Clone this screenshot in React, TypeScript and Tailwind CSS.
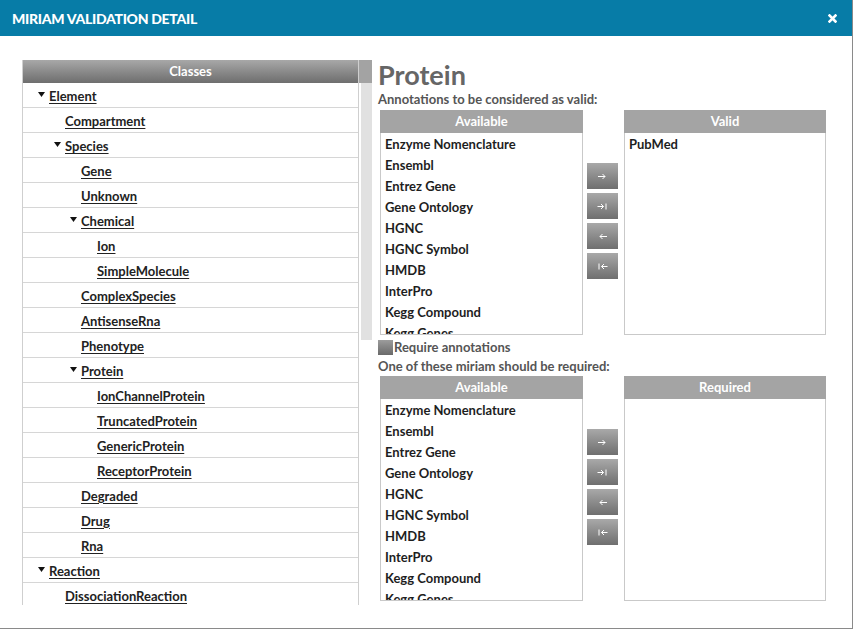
import type { ReactNode } from "react";

type Node = { label: string; level: number; open?: boolean };

const tree: Node[] = [
  { label: "Element", level: 0, open: true },
  { label: "Compartment", level: 1 },
  { label: "Species", level: 1, open: true },
  { label: "Gene", level: 2 },
  { label: "Unknown", level: 2 },
  { label: "Chemical", level: 2, open: true },
  { label: "Ion", level: 3 },
  { label: "SimpleMolecule", level: 3 },
  { label: "ComplexSpecies", level: 2 },
  { label: "AntisenseRna", level: 2 },
  { label: "Phenotype", level: 2 },
  { label: "Protein", level: 2, open: true },
  { label: "IonChannelProtein", level: 3 },
  { label: "TruncatedProtein", level: 3 },
  { label: "GenericProtein", level: 3 },
  { label: "ReceptorProtein", level: 3 },
  { label: "Degraded", level: 2 },
  { label: "Drug", level: 2 },
  { label: "Rna", level: 2 },
  { label: "Reaction", level: 0, open: true },
  { label: "DissociationReaction", level: 1 },
];

const databases = [
  "Enzyme Nomenclature",
  "Ensembl",
  "Entrez Gene",
  "Gene Ontology",
  "HGNC",
  "HGNC Symbol",
  "HMDB",
  "InterPro",
  "Kegg Compound",
  "Kegg Genes",
];

const indent = ["pl-[15px]", "pl-[31px]", "pl-[47px]", "pl-[63px]"];

function Caret() {
  return (
    <svg width="7" height="5" viewBox="0 0 7 5" className="mr-[4px] mb-[4px]">
      <path d="M0 0h7L3.5 5z" fill="#111" />
    </svg>
  );
}

function TreeRow({ node }: { node: Node }) {
  return (
    <div className={`h-[25px] shrink-0 flex items-center pt-[3px] border-b border-[#d6d6d6] ${indent[node.level]}`}>
      {node.open ? <Caret /> : <span className="w-[11px]" />}
      <a className="underline underline-offset-2 text-[13px] font-bold text-[#222]">{node.label}</a>
    </div>
  );
}

function ListBox({ title, items }: { title: string; items: string[] }) {
  return (
    <div className="flex flex-col">
      <div className="h-[23px] bg-[#a4a4a4] text-white font-bold text-[13px] flex items-center justify-center">
        {title}
      </div>
      <div className="h-[202px] border border-t-0 border-[#c9c9c9] overflow-hidden pt-[1px]">
        {items.map((it) => (
          <div key={it} className="h-[21px] pl-[4px] flex items-center text-[13px] font-bold text-[#1e1e1e]">
            {it}
          </div>
        ))}
      </div>
    </div>
  );
}

function MoveButton({ children }: { children: ReactNode }) {
  return (
    <div className="w-[31px] h-[26px] bg-gradient-to-b from-[#a9a9a9] to-[#6f6f6f] flex items-center justify-center text-white">
      {children}
    </div>
  );
}

function Arrow({ d }: { d: string }) {
  return (
    <svg width="11" height="7" viewBox="0 0 11 7" fill="none" stroke="#fff" strokeWidth="1">
      <path d={d} />
    </svg>
  );
}

// add, add all, remove, remove all
function Buttons() {
  return (
    <div className="flex flex-col gap-[4px] pt-[53px] ml-[4px] mr-[6px]">
      <MoveButton>
        <Arrow d="M1 3.5h7M5.5 1l2.5 2.5L5.5 6" />
      </MoveButton>
      <MoveButton>
        <Arrow d="M0.5 3.5h6M4 1l2.5 2.5L4 6M9 0.5v6" />
      </MoveButton>
      <MoveButton>
        <Arrow d="M3 3.5h7M5.5 1L3 3.5L5.5 6" />
      </MoveButton>
      <MoveButton>
        <Arrow d="M4.5 3.5h6M7 1L4.5 3.5L7 6M2 0.5v6" />
      </MoveButton>
    </div>
  );
}

function Picker({ left, right, rightItems }: { left: string[]; right: string; rightItems: string[] }) {
  return (
    <div className="flex ml-[2px]">
      <div className="w-[203px]">
        <ListBox title="Available" items={left} />
      </div>
      <Buttons />
      <div className="w-[202px]">
        <ListBox title={right} items={rightItems} />
      </div>
    </div>
  );
}

export default function App() {
  return (
    <div className="w-[853px] h-[630px] bg-white overflow-hidden" style={{ fontFamily: "Lato, 'Open Sans', sans-serif" }}>
      <div className="w-[853px] h-[629px] border-r border-b border-[#8a8a8a] flex flex-col">
        <div className="h-[36px] shrink-0 bg-[#077ca7] flex items-center justify-between pl-[12px] pr-[15px]">
          <span className="text-white font-black text-[14px] tracking-[-0.3px]">MIRIAM VALIDATION DETAIL</span>
          <svg width="9" height="9" viewBox="0 0 9 9" stroke="#fff" strokeWidth="2.6" strokeLinecap="square">
            <path d="M1.5 1.5l6 6M7.5 1.5l-6 6" />
          </svg>
        </div>

        <div className="flex pl-[22px] pt-[24px]">
          {/* class tree */}
          <div className="flex h-[545px]">
            <div className="w-[337px] flex flex-col border-l border-r border-[#cfcfcf] overflow-hidden">
              <div className="h-[23px] shrink-0 bg-gradient-to-b from-[#a8a8a8] to-[#6e6e6e] text-white font-bold text-[13px] flex items-center justify-center">
                Classes
              </div>
              {tree.map((n) => (
                <TreeRow key={n.label} node={n} />
              ))}
            </div>
            <div className="w-[13px] flex flex-col">
              <div className="h-[23px] bg-[#a3a3a3]" />
              <div className="h-[257px] ml-[2px] bg-[#e1e1e1]" />
            </div>
          </div>

          {/* annotation rules */}
          <div className="ml-[6px] flex flex-col">
            <div className="h-[33px] text-[27px] font-bold text-[#666] leading-[33px] -mt-[2px]">Protein</div>
            <div className="text-[13px] font-bold text-[#555] leading-[16px] mb-[3px]">
              Annotations to be considered as valid:
            </div>
            <Picker left={databases} right="Valid" rightItems={["PubMed"]} />
            <div className="flex items-center mt-[5px] h-[15px]">
              <span className="w-[15px] h-[15px] bg-gradient-to-b from-[#9c9c9c] to-[#6a6a6a] mr-[1px]" />
              <span className="text-[13px] font-bold text-[#555]">Require annotations</span>
            </div>
            <div className="text-[13px] font-bold text-[#555] leading-[16px] mt-[3px] mb-[2px]">
              One of these miriam should be required:
            </div>
            <div className="h-[226px] overflow-hidden">
              <Picker left={databases} right="Required" rightItems={[]} />
            </div>
          </div>
        </div>
      </div>
    </div>
  );
}
